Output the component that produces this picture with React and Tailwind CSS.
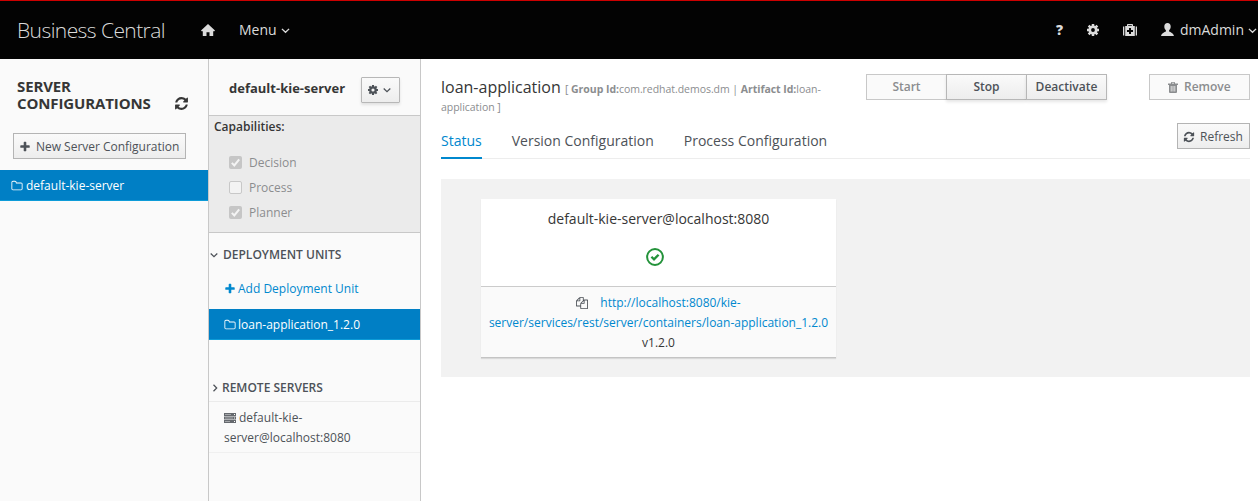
import React from "react";

const ICONS = {
  refresh:
    "M1639 1056q0 5-1 7-64 268-268 434.5t-478 166.5q-146 0-282.500-55t-243.500-157l-129 129q-19 19-45 19t-45-19-19-45v-448q0-26 19-45t45-19h448q26 0 45 19t19 45-19 45l-137 137q71 66 161 102t187 36q134 0 250-65t186-179q11-17 53-117 8-23 30-23h192q13 0 22.500 9.500t9.500 22.500zm25-800v448q0 26-19 45t-45 19h-448q-26 0-45-19t-19-45 19-45l138-138q-148-137-349-137-134 0-250 65t-186 179q-11 17-53 117-8 23-30 23h-199q-13 0-22.500-9.500t-9.500-22.500v-7q65-268 270-434.500t480-166.500q146 0 284 55.500t245 156.500l130-129q19-19 45-19t45 19 19 45z",
  plus: "M1600 736v192q0 40-28 68t-68 28h-416v416q0 40-28 68t-68 28h-192q-40 0-68-28t-28-68v-416h-416q-40 0-68-28t-28-68v-192q0-40 28-68t68-28h416v-416q0-40 28-68t68-28h192q40 0 68 28t28 68v416h416q40 0 68 28t28 68z",
  folder:
    "M1600 1312v-704q0-40-28-68t-68-28h-704q-40 0-68-28t-28-68v-64q0-40-28-68t-68-28h-320q-40 0-68 28t-28 68v960q0 40 28 68t68 28h1216q40 0 68-28t28-68zm128-704v704q0 92-66 158t-158 66h-1216q-92 0-158-66t-66-158v-960q0-92 66-158t158-66h320q92 0 158 66t66 158v32h672q92 0 158 66t66 158z",
  copy: "M1696 384q40 0 68 28t28 68v1216q0 40-28 68t-68 28h-960q-40 0-68-28t-28-68v-288h-544q-40 0-68-28t-28-68v-672q0-40 20-88t48-76l408-408q28-28 76-48t88-20h416q40 0 68 28t28 68v328q68-40 128-40h416zm-544 213l-299 299h299v-299zm-640-384l-299 299h299v-299zm196 647l316-316v-416h-384v416q0 40-28 68t-68 28h-416v640h512v-256q0-40 20-88t48-76zm956 804v-1152h-384v416q0 40-28 68t-68 28h-416v640h896z",
};

function Icon({ name, className }) {
  return (
    <svg viewBox="0 0 1792 1792" fill="currentColor" className={className}>
      <path d={ICONS[name]} />
    </svg>
  );
}

function Angle({ className }) {
  return (
    <svg viewBox="0 0 12 12" fill="none" stroke="currentColor" className={className}>
      <path d="M2.700 4.500 6 7.700l3.300-3.200" strokeWidth="1.250" />
    </svg>
  );
}

function Gear({ className }) {
  return (
    <svg viewBox="0 0 24 24" className={className}>
      <g stroke="currentColor" strokeWidth="5">
        <path d="M12 0v6M12 18v6M0 12h6M18 12h6M3.300 3.300l4.300 4.300M16.400 16.400l4.300 4.300M3.300 20.700l4.300-4.300M16.400 7.600l4.300-4.300" />
      </g>
      <circle cx="12" cy="12" r="6.500" fill="none" stroke="currentColor" strokeWidth="5.400" />
    </svg>
  );
}

function Check({ label, on }) {
  return (
    <div className="flex h-[25px] items-center pl-5 text-[12px] text-[#8b8d8f]">
      {on ? (
        <svg viewBox="0 0 13 13" className="mr-[7px] size-[13px]">
          <rect width="13" height="13" rx="2" fill="#c6c6c6" />
          <path d="M2.800 6.900l2.500 2.500L10.200 3.300" fill="none" stroke="#f4f4f4" strokeWidth="2" />
        </svg>
      ) : (
        <span className="mr-[7px] size-[13px] rounded-[2px] border border-[#c8c8c8] bg-[#f3f3f3]" />
      )}
      {label}
    </div>
  );
}

function Header() {
  return (
    <header className="flex h-[59px] shrink-0 items-center border-t border-[#cc0000] bg-[#030303] pb-px text-[14px] text-[#dbdbdb]">
      <span className="ml-[17px] w-[184px] whitespace-nowrap pt-[3px] text-[21px] font-light tracking-[-0.57px]">Business Central</span>
      <svg viewBox="0 0 14 12" className="h-3 w-3.5" fill="currentColor">
        <path d="M7 0 14 6.500 13.400 7.200H12.200V12H8.500V8.200H5.500V12H1.800V7.200H.6L0 6.500z" />
      </svg>
      <span className="ml-6">Menu</span>
      <Angle className="ml-[2px] mt-[2px] size-[13px]" />
      <div className="ml-auto flex items-center">
        <span className="text-[14px] font-extrabold">?</span>
        <Gear className="ml-6 size-3" />
        <svg viewBox="0 0 14 12" className="ml-6 h-3 w-3.5" fill="currentColor">
          <path d="M0 2.500h1.300v9H0zM12.700 2.500H14v9h-1.300z" />
          <path fillRule="evenodd" d="M2.200 2H4V.8Q4 0 4.800 0h4.400Q10 0 10 .8V2h1.800v10H2.200zM5.200 1.200V2h3.600v-.8zM6 4v2H4v2h2v2h2V8h2V6H8V4z" />
        </svg>
        <svg viewBox="0 0 13 13" className="ml-6 size-[13px]" fill="currentColor">
          <path d="M6.500 0c2 0 3.200 1.400 3.200 3.500 0 1.700-.7 3-1.600 3.800v1.200c1.500.8 4.100 1.400 4.900 4.500H0c.8-3.100 3.400-3.700 4.900-4.500V7.300C4 6.500 3.300 5.200 3.300 3.500 3.300 1.400 4.500 0 6.500 0z" />
        </svg>
        <span className="ml-1.5">dmAdmin</span>
        <Angle className="-mr-px ml-[2px] mt-[2px] size-[13px]" />
      </div>
    </header>
  );
}

function Servers() {
  return (
    <aside className="flex w-[209px] shrink-0 flex-col border-r border-[#c8c8c8] bg-[#fafafa]">
      <div className="mt-[19px] flex items-end px-[17px]">
        <h1 className="w-[157px] text-[15px] font-bold leading-[17px] tracking-[-0.12px]">SERVER CONFIGURATIONS</h1>
        <Icon name="refresh" className="mb-px size-[15px]" />
      </div>
      <button className="ml-[13px] mt-[21px] flex h-[26px] w-[173px] items-center whitespace-nowrap border border-[#b4b4b4] bg-gradient-to-b from-[#fafafa] to-[#ededed] pl-[5px] pt-[2px] text-[12px] tracking-[-0.02px] text-[#4d5258]">
        <Icon name="plus" className="mr-[5px] size-3" />
        New Server Configuration
      </button>
      <div className="mt-[11px] flex h-[31px] items-center border-b border-[#0d9bd8] bg-[#007fc5] pl-[11px] pt-px text-[12px] text-white">
        <Icon name="folder" className="mr-[3px] size-3" />
        default-kie-server
      </div>
    </aside>
  );
}

function Units() {
  return (
    <section className="flex w-[212px] shrink-0 flex-col border-r border-[#c8c8c8] bg-[#fafafa] text-[12px]">
      <div className="flex h-[57px] items-start border-b border-[#c8c8c8] pl-5">
        <h2 className="mt-[19px] w-[132px] whitespace-nowrap text-[13px] font-bold leading-[20px]">default-kie-server</h2>
        <button className="mt-[18px] flex h-[26px] w-[39px] items-center rounded-[1px] border border-[#b7b7b7] bg-gradient-to-b from-[#fafafa] to-[#ededed] pl-1.5 text-[#4d5258] shadow-[0_2px_3px_rgba(3,3,3,0.1)]">
          <Gear className="size-2.5" />
          <Angle className="ml-[3px] size-3" />
        </button>
      </div>
      <div className="h-[117px] border-b border-[#c8c8c8] bg-[#ebebeb]">
        <h3 className="ml-[5px] pt-px font-semibold leading-[20px]">Capabilities:</h3>
        <div className="mt-[13px]">
          <Check label="Decision" on />
          <Check label="Process" />
          <Check label="Planner" on />
        </div>
      </div>
      <h3 className="mt-3 flex h-5 items-center font-semibold text-[#4d5258]">
        <Angle className="-ml-px mr-[3px] size-3" />
        DEPLOYMENT UNITS
      </h3>
      <a className="ml-[15px] mt-[14px] flex h-5 items-center text-[#0088ce]">
        <Icon name="plus" className="mr-[2px] size-3" />
        Add Deployment Unit
      </a>
      <div className="mt-[10px] flex h-[31px] items-center border-b border-[#0d9bd8] bg-[#007fc5] pl-[15px] pt-[2px] text-white">
        <Icon name="folder" className="mr-[2px] size-3" />
        loan-application_1.2.0
      </div>
      <h3 className="mt-[38px] flex h-[24px] items-start border-b border-[#ebebeb] font-semibold leading-[20px] text-[#4d5258]">
        <Angle className="mr-px mt-1 size-3 -rotate-90" />
        REMOTE SERVERS
      </h3>
      <div className="h-[51px] border-b border-[#f0f0f0] pl-[15px] pt-[6px] leading-[20px] text-[#4d5258]">
        <svg viewBox="0 0 12 10" className="mr-[3px] inline-block h-2.5 w-3 align-[-1px]">
          <path d="M0 0h12v3H0zM0 3.500h12v3H0zM0 7h12v3H0z" fill="#65696e" />
          <path d="M1 1h6v1H1zM1 4.500h8v1H1zM1 8h5v1H1z" fill="#a5a7aa" />
          <path d="M10 1h1v1h-1zM10 4.500h1v1h-1zM10 8h1v1h-1z" fill="#fff" />
        </svg>
        default-kie-
        <br />
        server@localhost:8080
      </div>
    </section>
  );
}

function Container() {
  return (
    <main className="min-w-0 flex-1 pl-5 pr-2">
      <div className="flex h-[62px] items-start">
        <h2 className="mt-[20px] w-[425px] whitespace-nowrap text-[16px] leading-[16px]">
          loan-application{" "}
          <small className="text-[10.500px] tracking-[-0.04px] text-[#8b8d8f]">
            [ <b>Group Id:</b>com.redhat.demos.dm | <b>Artifact Id:</b>loan-
            <br />
            application ]
          </small>
        </h2>
        <div className="mt-[15px] flex text-[12px] font-semibold text-[#4d5258]">
          <button className="h-[26px] w-[80px] border border-r-0 border-[#c8c8c8] bg-[#fafafa] text-[#8b8d8f]">Start</button>
          <button className="h-[26px] w-[80px] border border-r-0 border-[#b7b7b7] bg-gradient-to-b from-[#fafafa] to-[#ededed] shadow-[0_2px_3px_rgba(3,3,3,0.1)]">Stop</button>
          <button className="h-[26px] w-[81px] border border-[#b7b7b7] bg-gradient-to-b from-[#fafafa] to-[#ededed] shadow-[0_2px_3px_rgba(3,3,3,0.1)]">Deactivate</button>
        </div>
        <button className="ml-auto mt-[15px] flex h-[26px] w-[101px] items-center border border-[#c8c8c8] bg-[#fafafa] pl-[18px] text-[12px] font-semibold text-[#8b8d8f]">
          <svg viewBox="0 0 10 11" className="mr-1.5 h-[11px] w-2.5">
            <path d="M0 1.500h3V.8Q3 0 3.800 0h2.400Q7 0 7 .8v.7h3V3H9v7q0 1-1 1H2q-1 0-1-1V3H0z" fill="currentColor" />
            <path d="M3.200 4v5.500M5 4v5.500M6.800 4v5.500M4 1.200h2" stroke="#fafafa" strokeWidth=".8" />
          </svg>
          Remove
        </button>
      </div>
      <div className="flex h-[38px] items-start border-b border-[#ededed] text-[14px] text-[#4d5258]">
        <span className="mt-[9px] h-[29px] border-b-2 border-[#0088ce] leading-[22px] text-[#0088ce]">Status</span>
        <span className="ml-[30px] mt-[9px] leading-[22px]">Version Configuration</span>
        <span className="ml-[30px] mt-[9px] leading-[22px]">Process Configuration</span>
        <button className="ml-auto mt-[2px] flex h-[26px] w-[73px] items-center border border-[#b4b4b4] bg-gradient-to-b from-[#fafafa] to-[#ededed] pl-[5px] pt-[2px] text-[12px]">
          <Icon name="refresh" className="mr-[5px] size-3" />
          Refresh
        </button>
      </div>
      <div className="mt-5 h-[198px] bg-[#f2f2f2] pl-10 pt-5">
        <div className="flex h-[159px] w-[355px] flex-col border-b border-[#c4c4c4] bg-white text-center shadow-[0_1px_1px_rgba(3,3,3,0.1)]">
          <div className="flex h-[88px] flex-col items-center border-b border-[#cbcbcb]">
            <h3 className="mt-[9px] text-[14px] leading-[22px]">default-kie-server@localhost:8080</h3>
            <svg viewBox="0 0 18 18" className="mr-[7px] mt-[18px] size-[18px]" fill="none" stroke="#23923a">
              <circle cx="9" cy="9" r="7.900" strokeWidth="2" />
              <path d="M5.400 8.800l2.600 2.600 4.600-4.700" strokeWidth="2.300" />
            </svg>
          </div>
          <div className="flex-1 bg-[#fafafa] pt-[6px] text-[12px] leading-[20px]">
            <Icon name="copy" className="mr-3 inline-block size-3 align-[-2px] text-[#4d5258]" />
            <a className="text-[#0088ce]">
              http://localhost:8080/kie-
              <br />
              server/services/rest/server/containers/loan-application_1.2.0
            </a>
            <br />
            v1.2.0
          </div>
        </div>
      </div>
    </main>
  );
}

export default function App() {
  return (
    <div className="flex h-[501px] w-[1258px] flex-col overflow-hidden bg-white font-['Open_Sans','Noto_Sans',sans-serif] text-[#363636]">
      <Header />
      <div className="flex min-h-0 flex-1">
        <Servers />
        <Units />
        <Container />
      </div>
    </div>
  );
}
